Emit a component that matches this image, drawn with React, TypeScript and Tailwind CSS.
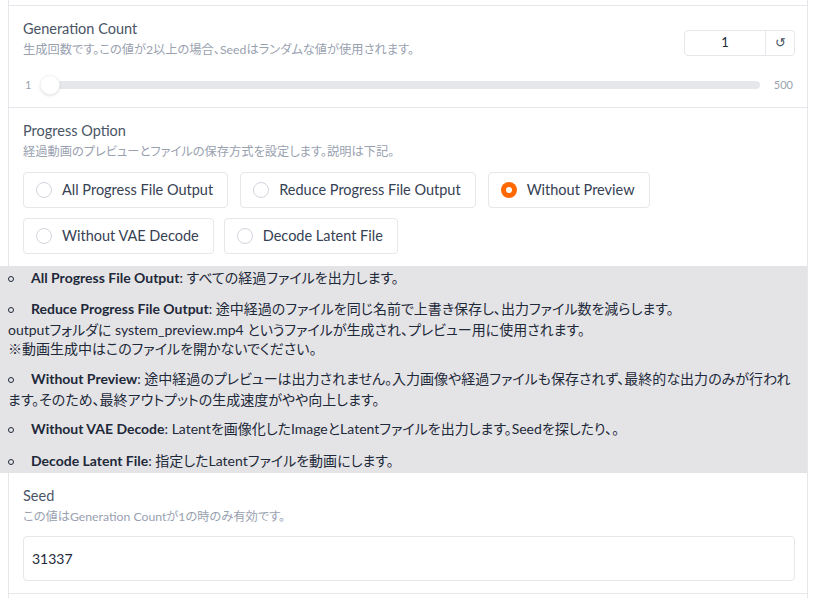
import React from "react";

const font = "font-['Lato','Noto_Sans_CJK_JP',sans-serif]";

const options = [
  "All Progress File Output",
  "Reduce Progress File Output",
  "Without Preview",
  "Without VAE Decode",
  "Decode Latent File",
];

const Radio = ({ label, checked }: { label: string; checked?: boolean }) => (
  <label className="flex h-9 items-center gap-2.5 rounded border border-gray-200 bg-white pl-3 pr-3.5 text-[14.5px] text-gray-700">
    {checked ? (
      <span className="flex h-4 w-4 items-center justify-center rounded-full bg-orange-500">
        <span className="h-1.5 w-1.5 rounded-full bg-white" />
      </span>
    ) : (
      <span className="h-4 w-4 rounded-full border border-gray-300 bg-white" />
    )}
    {label}
  </label>
);

const Bullet = () => (
  <span className="inline-block w-[23px] align-middle">
    <span className="mb-[3px] inline-block h-[6px] w-[6px] rounded-full border border-gray-800" />
  </span>
);

const App = () => {
  return (
    <div className={`min-h-screen bg-white ${font} [font-feature-settings:'palt']`}>
      <div className="mx-2 border-x border-gray-200">
        <div className="h-[6px] border-b border-gray-200" />

        {/* Generation Count */}
        <div className="border-b border-gray-200 pb-3 pl-3.5 pr-3 pt-3">
          <div className="flex justify-between">
            <div>
              <div className="text-[14.5px] leading-[22px] text-gray-600">Generation Count</div>
              <div className="text-[12.25px] leading-5 text-gray-400">
                生成回数です。この値が2以上の場合、Seedはランダムな値が使用されます。
              </div>
            </div>
            <div className="mt-3 flex h-[26px] w-[111px] rounded border border-gray-200 text-[13px] text-gray-800">
              <div className="flex flex-1 items-center justify-center">1</div>
              <div className="flex w-[29px] items-center justify-center border-l border-gray-200 text-gray-600">
                ↺
              </div>
            </div>
          </div>
          <div className="mt-[15px] flex h-5 items-center gap-2.5 text-[11px] text-gray-400">
            <span className="pl-0.5">1</span>
            <div className="relative flex-1">
              <div className="h-2 rounded-full bg-gray-200" />
              <span className="absolute -left-[1px] -top-1.5 h-5 w-5 rounded-full border border-gray-100 bg-white shadow-sm" />
            </div>
            <span className="pl-1 pr-0.5">500</span>
          </div>
        </div>

        {/* Progress Option */}
        <div className="pb-3 pl-3.5 pr-3 pt-3">
          <div className="text-[14.5px] leading-[22px] text-gray-600">Progress Option</div>
          <div className="text-[12.25px] leading-5 text-gray-400">
            経過動画のプレビューとファイルの保存方式を設定します。説明は下記。
          </div>
          <div className="mt-2.5 flex flex-col gap-2.5">
            <div className="flex gap-3">
              <Radio label={options[0]} />
              <Radio label={options[1]} />
              <Radio label={options[2]} checked />
            </div>
            <div className="flex gap-2.5">
              <Radio label={options[3]} />
              <Radio label={options[4]} />
            </div>
          </div>
        </div>

        {/* description */}
        <div className="-ml-[9px] bg-[#e4e4e7] px-2 pb-px pt-0.5 text-[14px] leading-[19px] text-gray-800">
          <p className="mb-[10.5px]">
            <Bullet />
            <b className="font-bold">All Progress File Output</b>: すべての経過ファイルを出力します。
          </p>
          <p className="mb-[10.5px]">
            <Bullet />
            <b className="font-bold">Reduce Progress File Output</b>: 途中経過のファイルを同じ名前で上書き保存し、出力ファイル数を減らします。
            <br />
            outputフォルダに system_preview.mp4 というファイルが生成され、プレビュー用に使用されます。
            <br />
            ※動画生成中はこのファイルを開かないでください。
          </p>
          <p className="mb-[10.5px]">
            <Bullet />
            <b className="font-bold">Without Preview</b>: 途中経過のプレビューは出力されません。入力画像や経過ファイルも保存されず、最終的な出力のみが行われます。そのため、最終アウトプットの生成速度がやや向上します。
          </p>
          <p className="mb-[10.5px]">
            <Bullet />
            <b className="font-bold">Without VAE Decode</b>: Latentを画像化したImageとLatentファイルを出力します。Seedを探したり、。
          </p>
          <p>
            <Bullet />
            <b className="font-bold">Decode Latent File</b>: 指定したLatentファイルを動画にします。
          </p>
        </div>

        {/* Seed */}
        <div className="border-b border-gray-200 pb-3 pl-3.5 pr-3 pt-3">
          <div className="text-[14.5px] leading-[22px] text-gray-600">Seed</div>
          <div className="text-[12.25px] leading-5 text-gray-400">この値はGeneration Countが1の時のみ有効です。</div>
          <div className="mt-[9px] flex h-[45px] items-center rounded border border-gray-200 px-2 text-[14px] text-gray-800">
            31337
          </div>
        </div>
        <div className="h-2" />
      </div>
    </div>
  );
};

export default App;
